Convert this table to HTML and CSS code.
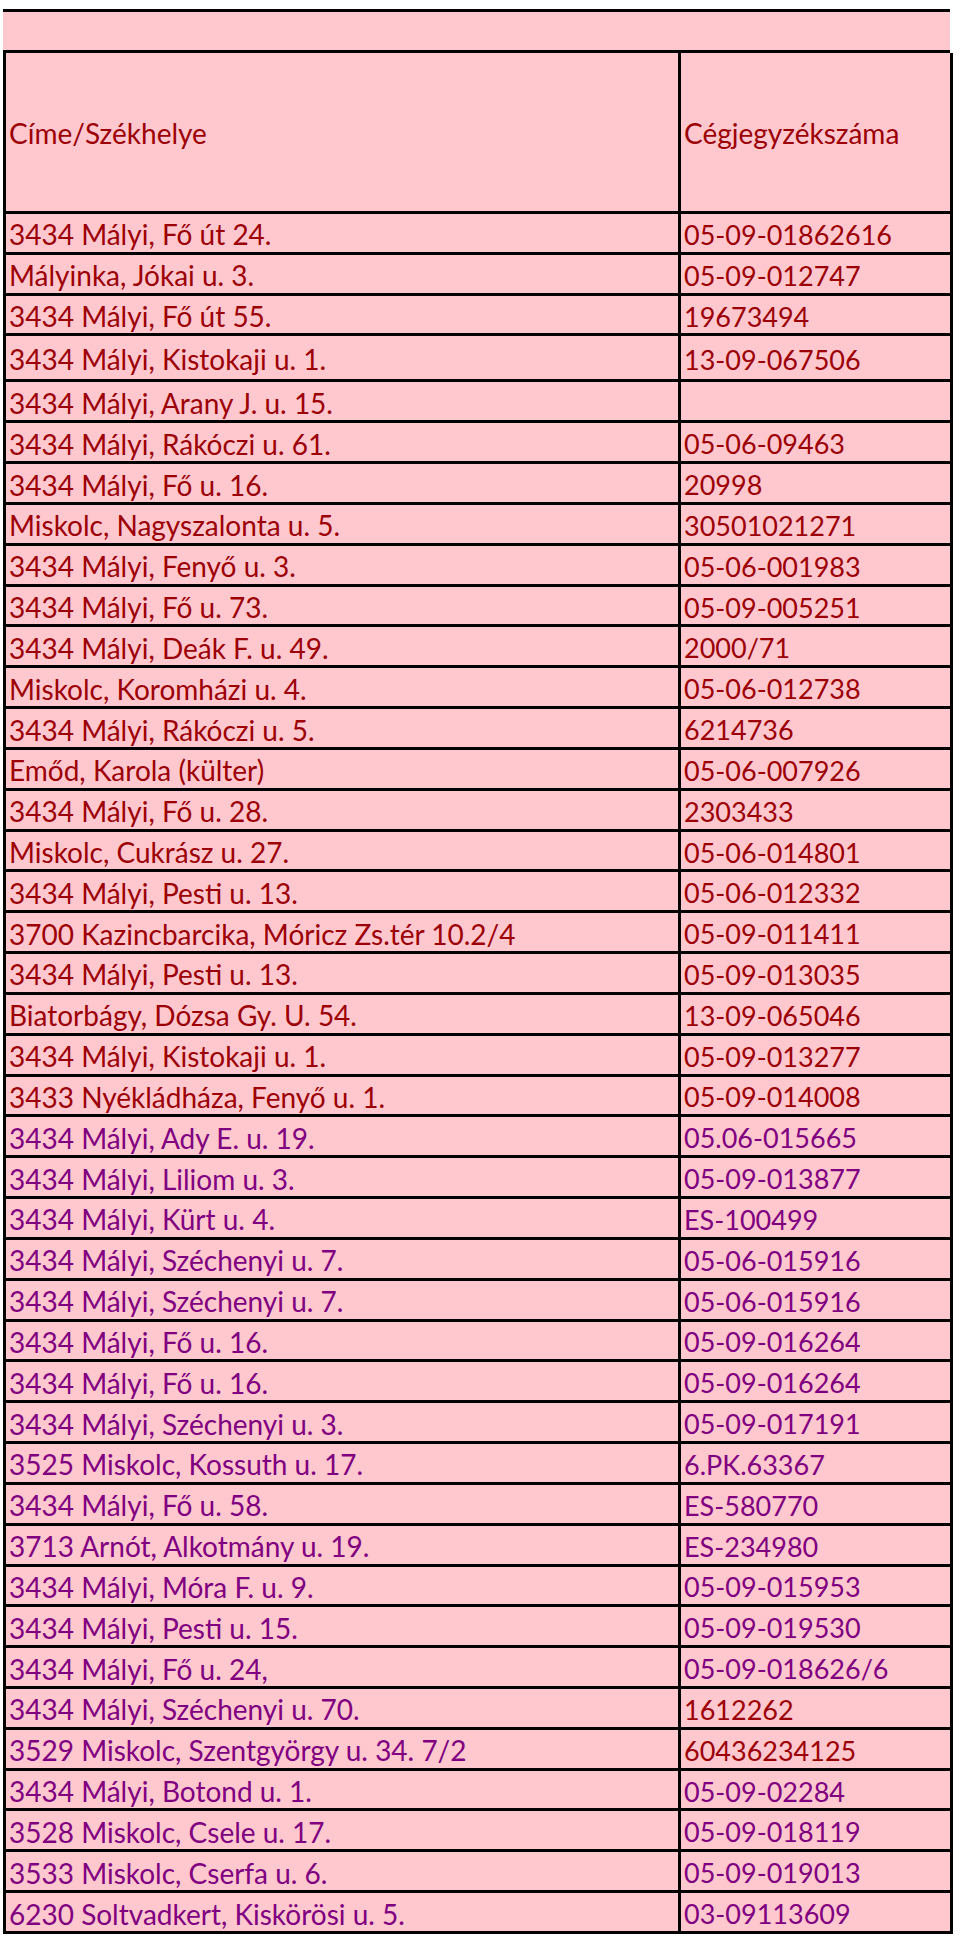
FILE: index.html
```html
<!DOCTYPE html>
<html lang="hu">
<head>
<meta charset="utf-8">
<title>Címe/Székhelye – Cégjegyzékszáma</title>
<link rel="stylesheet" href="styles.css">
</head>
<body>
<div class="page">
  <div class="band"></div>
  <div class="sheet">
    <div class="cell head">Címe/Székhelye</div><div class="cell head">Cégjegyzékszáma</div>
    <div class="cell red">3434 Mályi, Fő út 24.</div><div class="cell num red">05-09-01862616</div>
    <div class="cell red">Mályinka, Jókai u. 3.</div><div class="cell num red">05-09-012747</div>
    <div class="cell red">3434 Mályi, Fő út 55.</div><div class="cell num red">19673494</div>
    <div class="cell red tall">3434 Mályi, Kistokaji u. 1.</div><div class="cell num red tall">13-09-067506</div>
    <div class="cell red">3434 Mályi, Arany J. u. 15.</div><div class="cell num red"></div>
    <div class="cell red">3434 Mályi, Rákóczi u. 61.</div><div class="cell num red">05-06-09463</div>
    <div class="cell red">3434 Mályi, Fő u. 16.</div><div class="cell num red">20998</div>
    <div class="cell red">Miskolc, Nagyszalonta u. 5.</div><div class="cell num red">30501021271</div>
    <div class="cell red">3434 Mályi, Fenyő u. 3.</div><div class="cell num red">05-06-001983</div>
    <div class="cell red">3434 Mályi, Fő u. 73.</div><div class="cell num red">05-09-005251</div>
    <div class="cell red">3434 Mályi, Deák F. u. 49.</div><div class="cell num red">2000/71</div>
    <div class="cell red">Miskolc, Koromházi u. 4.</div><div class="cell num red">05-06-012738</div>
    <div class="cell red">3434 Mályi, Rákóczi u. 5.</div><div class="cell num red">6214736</div>
    <div class="cell red">Emőd, Karola (külter)</div><div class="cell num red">05-06-007926</div>
    <div class="cell red">3434 Mályi, Fő u. 28.</div><div class="cell num red">2303433</div>
    <div class="cell red">Miskolc, Cukrász u. 27.</div><div class="cell num red">05-06-014801</div>
    <div class="cell red">3434 Mályi, Pesti u. 13.</div><div class="cell num red">05-06-012332</div>
    <div class="cell red">3700 Kazincbarcika, Móricz Zs.tér 10.2/4</div><div class="cell num red">05-09-011411</div>
    <div class="cell red">3434 Mályi, Pesti u. 13.</div><div class="cell num red">05-09-013035</div>
    <div class="cell red">Biatorbágy, Dózsa Gy. U. 54.</div><div class="cell num red">13-09-065046</div>
    <div class="cell red">3434 Mályi, Kistokaji u. 1.</div><div class="cell num red">05-09-013277</div>
    <div class="cell red">3433 Nyékládháza, Fenyő u. 1.</div><div class="cell num red">05-09-014008</div>
    <div class="cell purple">3434 Mályi, Ady E. u. 19.</div><div class="cell num purple">05.06-015665</div>
    <div class="cell purple">3434 Mályi, Liliom u. 3.</div><div class="cell num purple">05-09-013877</div>
    <div class="cell purple">3434 Mályi, Kürt u. 4.</div><div class="cell num purple">ES-100499</div>
    <div class="cell purple">3434 Mályi, Széchenyi u. 7.</div><div class="cell num purple">05-06-015916</div>
    <div class="cell purple">3434 Mályi, Széchenyi u. 7.</div><div class="cell num purple">05-06-015916</div>
    <div class="cell purple">3434 Mályi, Fő u. 16.</div><div class="cell num purple">05-09-016264</div>
    <div class="cell purple">3434 Mályi, Fő u. 16.</div><div class="cell num purple">05-09-016264</div>
    <div class="cell purple">3434 Mályi, Széchenyi u. 3.</div><div class="cell num purple">05-09-017191</div>
    <div class="cell purple">3525 Miskolc, Kossuth u. 17.</div><div class="cell num purple">6.PK.63367</div>
    <div class="cell purple">3434 Mályi, Fő u. 58.</div><div class="cell num purple">ES-580770</div>
    <div class="cell purple">3713 Arnót, Alkotmány u. 19.</div><div class="cell num purple">ES-234980</div>
    <div class="cell purple">3434 Mályi, Móra F. u. 9.</div><div class="cell num purple">05-09-015953</div>
    <div class="cell purple">3434 Mályi, Pesti u. 15.</div><div class="cell num purple">05-09-019530</div>
    <div class="cell purple">3434 Mályi, Fő u. 24,</div><div class="cell num purple">05-09-018626/6</div>
    <div class="cell purple">3434 Mályi, Széchenyi u. 70.</div><div class="cell num red">1612262</div>
    <div class="cell purple">3529 Miskolc, Szentgyörgy u. 34. 7/2</div><div class="cell num red">60436234125</div>
    <div class="cell purple">3434 Mályi, Botond u. 1.</div><div class="cell num purple">05-09-02284</div>
    <div class="cell purple">3528 Miskolc, Csele u. 17.</div><div class="cell num purple">05-09-018119</div>
    <div class="cell purple">3533 Miskolc, Cserfa u. 6.</div><div class="cell num purple">05-09-019013</div>
    <div class="cell purple">6230 Soltvadkert, Kiskörösi u. 5.</div><div class="cell num purple">03-09113609</div>
  </div>
</div>
</body>
</html>
```
FILE: styles.css
```css
html, body {
  margin: 0;
  padding: 0;
  background: #ffffff;
}

.page {
  padding: 9px 0 0 3px;
  width: 947px;
  font-family: Lato, "Open Sans", "Liberation Sans", sans-serif;
}

.band {
  height: 38px;
  background: #ffc7ce;
  border-top: 3px solid #000;
}

.sheet {
  display: grid;
  grid-template-columns: 675px 272px;
  border-top: 3px solid #000;
  border-left: 3px solid #000;
  background: #ffc7ce;
}

.cell {
  box-sizing: border-box;
  height: 40.83px;
  border-right: 3px solid #000;
  border-bottom: 3px solid #000;
  display: flex;
  align-items: center;
  padding: 3px 0 0 3px;
  font-size: 28px;
  line-height: 1;
  white-space: nowrap;
}

.cell.num {
  font-size: 27px;
}

.cell.head {
  height: 161px;
  color: #9c0006;
  padding-top: 2px;
  font-size: 28px;
}

.cell.tall {
  height: 46px;
}

.red {
  color: #9c0006;
}

.purple {
  color: #800080;
}
```
